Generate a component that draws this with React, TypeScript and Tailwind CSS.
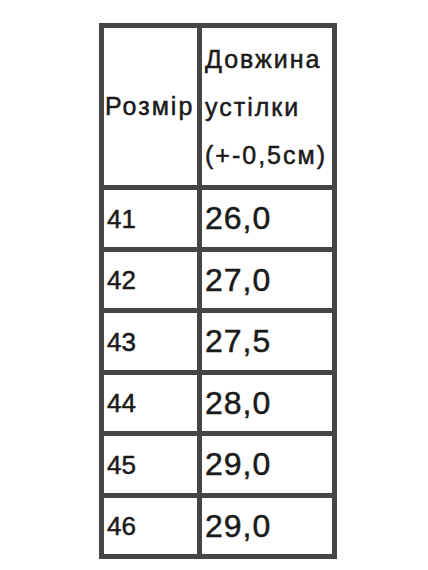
import * as React from "react"

const rows = [
  { size: "41", length: "26,0" },
  { size: "42", length: "27,0" },
  { size: "43", length: "27,5" },
  { size: "44", length: "28,0" },
  { size: "45", length: "29,0" },
  { size: "46", length: "29,0" },
]

export default function App() {
  return (
    <div className="min-h-screen bg-white pl-[99px] pt-[23px] text-[#1a1a1a] [font-family:'Liberation_Sans',Arial,sans-serif] [-webkit-text-stroke:0.5px_#1a1a1a]">
      <div className="grid w-[238px] grid-cols-[93px_130px] grid-rows-[157px_repeat(6,56.5px)] gap-[5px] bg-[#454545] p-[5px]">
        <div className="flex items-center bg-white pl-[1px] text-[25px] tracking-[2px]">
          Розмір
        </div>
        <div className="flex flex-col justify-center bg-white pl-[3px] text-[25px] leading-[48px] tracking-[2px]">
          <span>Довжина</span>
          <span>устілки</span>
          <span>(+-0,5см)</span>
        </div>
        {rows.map((r, i) => (
          <React.Fragment key={i}>
            <div className="flex items-center bg-white pl-[3px] pt-[2px] text-[26px]">
              {r.size}
            </div>
            <div className="flex items-center bg-white pl-[3px] text-[32px] tracking-[1px]">
              {r.length}
            </div>
          </React.Fragment>
        ))}
      </div>
    </div>
  )
}
